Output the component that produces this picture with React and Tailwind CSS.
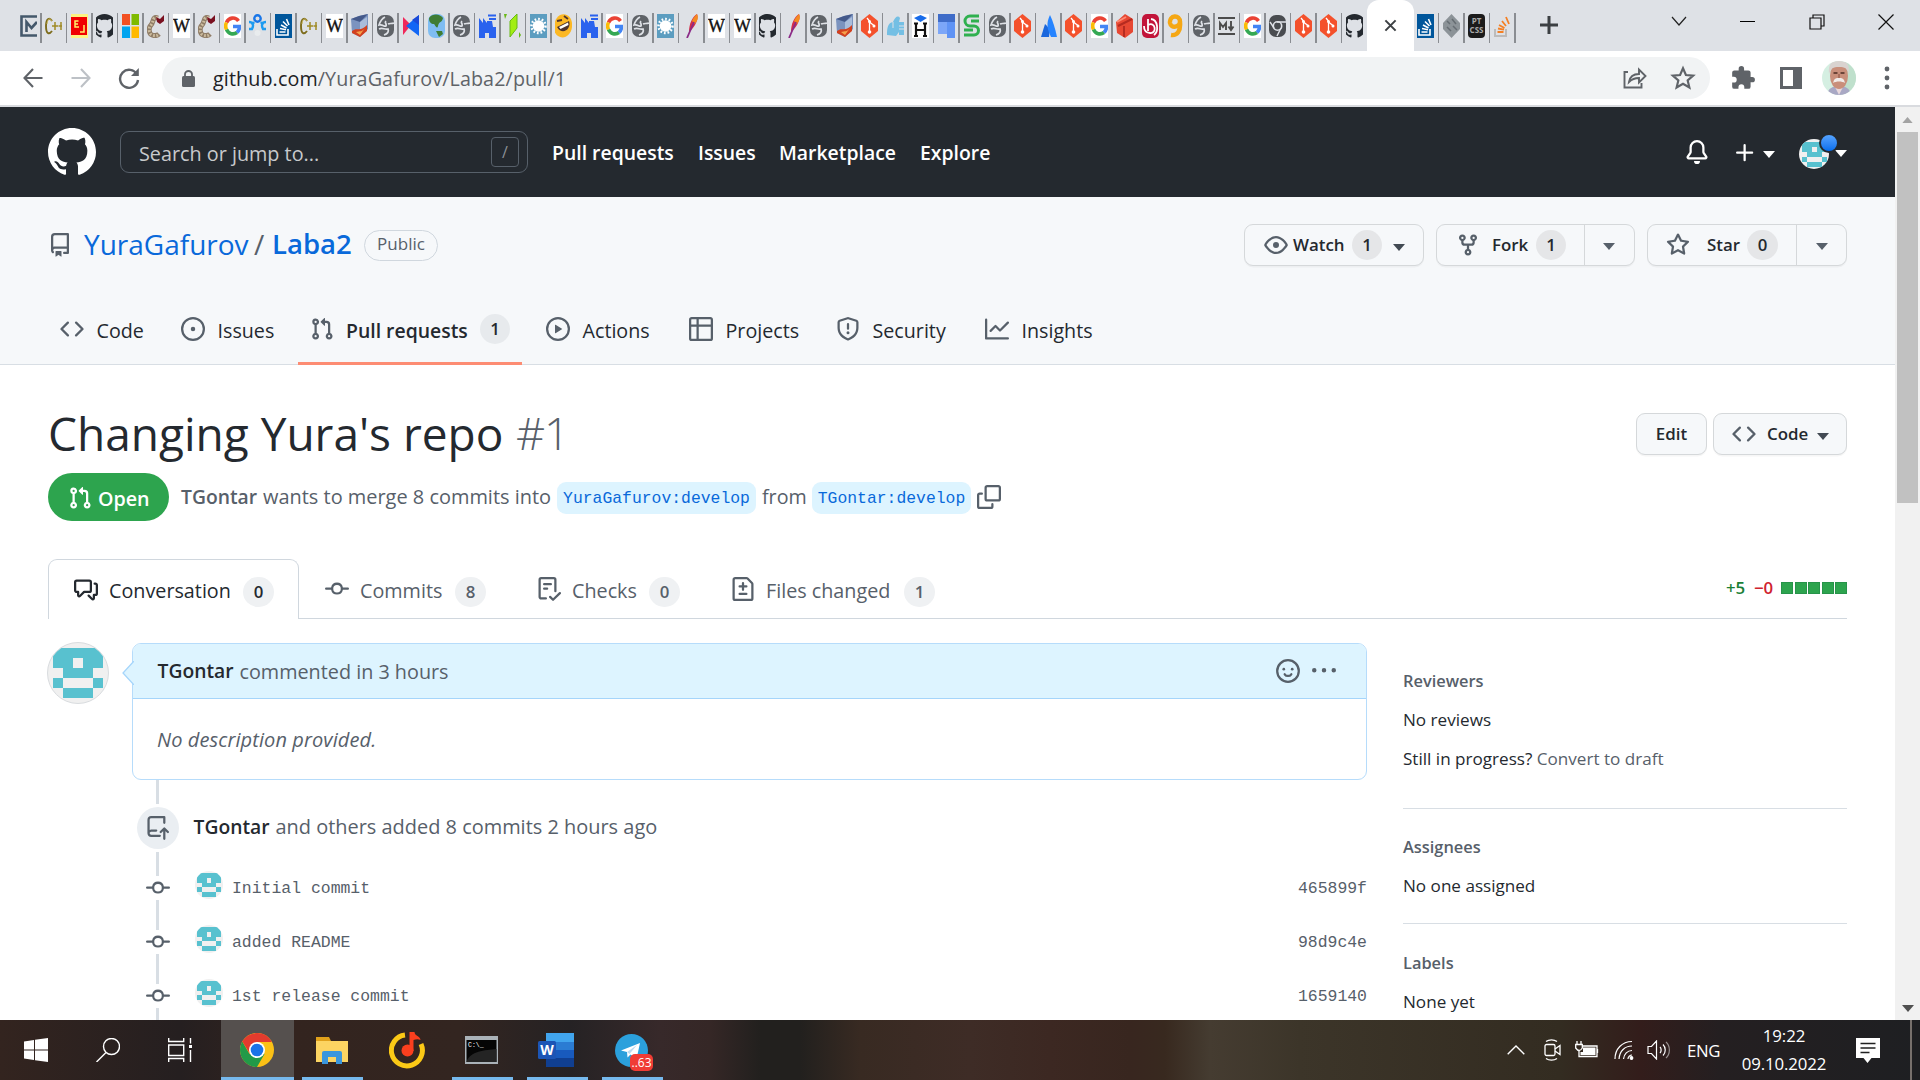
import React from "react";

const P = {
  mark: "M8 0C3.58 0 0 3.58 0 8c0 3.54 2.29 6.53 5.47 7.59.4.07.55-.17.55-.38 0-.19-.01-.82-.01-1.49-2.01.37-2.53-.49-2.69-.94-.09-.23-.48-.94-.82-1.13-.28-.15-.68-.52-.01-.53.63-.01 1.08.58 1.23.82.72 1.21 1.87.87 2.33.66.07-.52.28-.87.51-1.07-1.78-.2-3.64-.89-3.64-3.95 0-.87.31-1.59.82-2.15-.08-.2-.36-1.02.08-2.12 0 0 .67-.21 2.2.82.64-.18 1.32-.27 2-.27.68 0 1.36.09 2 .27 1.53-1.04 2.2-.82 2.2-.82.44 1.1.16 1.92.08 2.12.51.56.82 1.27.82 2.15 0 3.07-1.87 3.75-3.65 3.95.29.25.54.73.54 1.48 0 1.07-.01 1.93-.01 2.2 0 .21.15.46.55.38A8.013 8.013 0 0016 8c0-4.42-3.58-8-8-8z",
  repo: "M2 2.5A2.5 2.5 0 014.5 0h8.75a.75.75 0 01.75.75v12.5a.75.75 0 01-.75.75h-2.5a.75.75 0 110-1.5h1.75v-2h-8a1 1 0 00-.714 1.7.75.75 0 01-1.072 1.05A2.495 2.495 0 012 11.5v-9zm10.5-1V9h-8c-.356 0-.694.074-1 .208V2.5a1 1 0 011-1h8zM5 12.25v3.25a.25.25 0 00.4.2l1.45-1.087a.25.25 0 01.3 0L8.6 15.7a.25.25 0 00.4-.2v-3.25a.25.25 0 00-.25-.25h-3.5a.25.25 0 00-.25.25z",
  code: "M4.72 3.22a.75.75 0 011.06 1.06L2.06 8l3.72 3.72a.75.75 0 11-1.06 1.06L.47 8.53a.75.75 0 010-1.06l4.25-4.25zm6.56 0a.75.75 0 10-1.06 1.06L13.94 8l-3.72 3.72a.75.75 0 101.06 1.06l4.25-4.25a.75.75 0 000-1.06l-4.25-4.25z",
  issue: "M8 9.5a1.5 1.5 0 100-3 1.5 1.5 0 000 3zM8 0a8 8 0 100 16A8 8 0 008 0zM1.5 8a6.5 6.5 0 1113 0 6.5 6.5 0 01-13 0z",
  pr: "M7.177 3.073L9.573.677A.25.25 0 0110 .854v4.792a.25.25 0 01-.427.177L7.177 3.427a.25.25 0 010-.354zM3.75 2.5a.75.75 0 100 1.5.75.75 0 000-1.5zm-2.25.75a2.25 2.25 0 113 2.122v5.256a2.251 2.251 0 11-1.5 0V5.372A2.25 2.25 0 011.5 3.25zM11 2.5h-1V4h1a1 1 0 011 1v5.628a2.251 2.251 0 101.5 0V5A2.5 2.5 0 0011 2.5zm1 10.25a.75.75 0 111.5 0 .75.75 0 01-1.5 0zM3.75 12a.75.75 0 100 1.5.75.75 0 000-1.5z",
  play: "M1.5 8a6.5 6.5 0 1113 0 6.5 6.5 0 01-13 0zM8 0a8 8 0 100 16A8 8 0 008 0zM6.379 5.227A.25.25 0 006 5.442v5.117a.25.25 0 00.379.214l4.264-2.559a.25.25 0 000-.428L6.379 5.227z",
  table: "M0 1.75C0 .784.784 0 1.75 0h12.5C15.216 0 16 .784 16 1.75v12.5A1.75 1.75 0 0114.25 16H1.75A1.75 1.75 0 010 14.25V1.75zM1.5 6.5v7.75c0 .138.112.25.25.25H5v-8H1.5zM5 5V1.5H1.75a.25.25 0 00-.25.25V5H5zm1.5 1.5v8h7.75a.25.25 0 00.25-.25V6.5h-8zm8-1.5V1.75a.25.25 0 00-.25-.25H6.5V5h8z",
  shield: "M7.467.133a1.75 1.75 0 011.066 0l5.25 1.68A1.75 1.75 0 0115 3.48V7c0 1.566-.32 3.182-1.303 4.682-.983 1.498-2.585 2.813-5.032 3.855a1.7 1.7 0 01-1.33 0c-2.447-1.042-4.049-2.357-5.032-3.855C1.32 10.182 1 8.566 1 7V3.48a1.75 1.75 0 011.217-1.667l5.25-1.68zm.61 1.429a.25.25 0 00-.153 0l-5.25 1.68a.25.25 0 00-.174.238V7c0 1.358.275 2.666 1.057 3.86.784 1.194 2.121 2.34 4.366 3.297a.2.2 0 00.154 0c2.245-.956 3.582-2.104 4.366-3.298C13.225 9.666 13.5 8.36 13.5 7V3.48a.25.25 0 00-.174-.237l-5.25-1.68zM9 10.5a1 1 0 11-2 0 1 1 0 012 0zm-.25-5.75a.75.75 0 10-1.5 0v3a.75.75 0 001.5 0v-3z",
  graph: "M1.5 1.75a.75.75 0 00-1.5 0v12.5c0 .414.336.75.75.75h14.5a.75.75 0 000-1.5H1.5V1.75zm14.28 2.53a.75.75 0 00-1.06-1.06L10 7.94 7.53 5.47a.75.75 0 00-1.06 0L3.22 8.72a.75.75 0 001.06 1.06L7 7.06l2.47 2.47a.75.75 0 001.06 0l5.25-5.25z",
  eye: "M1.679 7.932c.412-.621 1.242-1.75 2.366-2.717C5.175 4.242 6.527 3.5 8 3.5c1.473 0 2.824.742 3.955 1.715 1.124.967 1.954 2.096 2.366 2.717a.119.119 0 010 .136c-.412.621-1.242 1.75-2.366 2.717C10.825 11.758 9.473 12.5 8 12.5c-1.473 0-2.824-.742-3.955-1.715C2.92 9.818 2.09 8.69 1.679 8.068a.119.119 0 010-.136zM8 2c-1.981 0-3.67.992-4.933 2.078C1.797 5.169.88 6.423.43 7.1a1.619 1.619 0 000 1.798c.45.678 1.367 1.932 2.637 3.024C4.329 13.008 6.019 14 8 14c1.981 0 3.67-.992 4.933-2.078 1.27-1.091 2.187-2.345 2.637-3.023a1.619 1.619 0 000-1.798c-.45-.678-1.367-1.932-2.637-3.023C11.671 2.992 9.981 2 8 2zm0 8a2 2 0 100-4 2 2 0 000 4z",
  fork: "M5 3.25a.75.75 0 11-1.5 0 .75.75 0 011.5 0zm0 2.122a2.25 2.25 0 10-1.5 0v.878A2.25 2.25 0 005.75 8.5h1.5v2.128a2.251 2.251 0 101.5 0V8.5h1.5a2.25 2.25 0 002.25-2.25v-.878a2.25 2.25 0 10-1.5 0v.878a.75.75 0 01-.75.75h-4.5A.75.75 0 015 6.25v-.878zm3.75 7.378a.75.75 0 11-1.5 0 .75.75 0 011.5 0zm3-8.75a.75.75 0 100-1.5.75.75 0 000 1.5z",
  star: "M8 .25a.75.75 0 01.673.418l1.882 3.815 4.21.612a.75.75 0 01.416 1.279l-3.046 2.97.719 4.192a.75.75 0 01-1.088.791L8 12.347l-3.766 1.98a.75.75 0 01-1.088-.79l.72-4.194L.818 6.374a.75.75 0 01.416-1.28l4.21-.611L7.327.668A.75.75 0 018 .25zm0 2.445L6.615 5.5a.75.75 0 01-.564.41l-3.097.45 2.24 2.184a.75.75 0 01.216.664l-.528 3.084 2.769-1.456a.75.75 0 01.698 0l2.77 1.456-.53-3.084a.75.75 0 01.216-.664l2.24-2.183-3.096-.45a.75.75 0 01-.564-.41L8 2.694v.001z",
  bell: "M8 16a2 2 0 001.985-1.75c.017-.137-.097-.25-.235-.25h-3.5c-.138 0-.252.113-.235.25A2 2 0 008 16zM3 5a5 5 0 0110 0v2.947c0 .05.015.098.042.139l1.703 2.555A1.518 1.518 0 0113.482 13H2.518a1.518 1.518 0 01-1.263-2.36l1.703-2.554A.25.25 0 003 7.947V5zm5-3.5A3.5 3.5 0 004.5 5v2.947c0 .346-.102.683-.294.97l-1.703 2.556a.018.018 0 00-.003.01c0 .01.008.017.018.017h10.964c.01 0 .018-.008.018-.017a.017.017 0 00-.003-.01l-1.703-2.554a1.75 1.75 0 01-.294-.97V5A3.5 3.5 0 008 1.5z",
  plus: "M7.75 2a.75.75 0 01.75.75V7h4.25a.75.75 0 110 1.5H8.5v4.25a.75.75 0 11-1.5 0V8.5H2.75a.75.75 0 010-1.5H7V2.75A.75.75 0 017.75 2z",
  talk: "M1.5 2.75a.25.25 0 01.25-.25h8.5a.25.25 0 01.25.25v5.5a.25.25 0 01-.25.25h-3.5a.75.75 0 00-.53.22L3.5 11.44V9.25a.75.75 0 00-.75-.75h-1a.25.25 0 01-.25-.25v-5.5zM1.75 1A1.75 1.75 0 000 2.75v5.5C0 9.216.784 10 1.75 10H2v1.543a1.457 1.457 0 002.487 1.03L7.061 10h3.189A1.75 1.75 0 0012 8.25v-5.5A1.75 1.75 0 0010.25 1h-8.5zM14.5 4.75a.25.25 0 00-.25-.25h-.5a.75.75 0 110-1.5h.5c.966 0 1.75.784 1.75 1.75v5.5A1.75 1.75 0 0114.25 12H14v1.543a1.457 1.457 0 01-2.487 1.03L9.22 12.28a.75.75 0 111.06-1.06l2.22 2.22v-2.19a.75.75 0 01.75-.75h1a.25.25 0 00.25-.25v-5.5z",
  commit: "M10.5 7.75a2.5 2.5 0 11-5 0 2.5 2.5 0 015 0zm1.43.75a4.002 4.002 0 01-7.86 0H.75a.75.75 0 110-1.5h3.32a4.001 4.001 0 017.86 0h3.32a.75.75 0 110 1.5h-3.32z",
  check: "M2.5 1.75a.25.25 0 01.25-.25h8.5a.25.25 0 01.25.25v7.736a.75.75 0 101.5 0V1.75A1.75 1.75 0 0011.25 0h-8.5A1.75 1.75 0 001 1.75v11.5c0 .966.784 1.75 1.75 1.75h3.17a.75.75 0 000-1.5H2.75a.25.25 0 01-.25-.25V1.75zM4.75 4a.75.75 0 000 1.5h4.5a.75.75 0 000-1.5h-4.5zM4 7.75A.75.75 0 014.75 7h2a.75.75 0 010 1.5h-2A.75.75 0 014 7.75zm11.774 3.537a.75.75 0 00-1.048-1.074L10.7 14.145 9.281 12.72a.75.75 0 00-1.062 1.058l1.943 1.95a.75.75 0 001.055.008l4.557-4.45z",
  diff: "M2.75 1.5a.25.25 0 00-.25.25v12.5c0 .138.112.25.25.25h10.5a.25.25 0 00.25-.25V4.664a.25.25 0 00-.073-.177l-2.914-2.914a.25.25 0 00-.177-.073H2.75zM1 1.75C1 .784 1.784 0 2.75 0h7.586c.464 0 .909.184 1.237.513l2.914 2.914c.329.328.513.773.513 1.237v9.586A1.75 1.75 0 0113.25 16H2.75A1.75 1.75 0 011 14.25V1.75zm7 1.5a.75.75 0 01.75.75v1.5h1.5a.75.75 0 010 1.5h-1.5v1.5a.75.75 0 01-1.5 0V7h-1.5a.75.75 0 010-1.5h1.5V4A.75.75 0 018 3.25zm-3 8a.75.75 0 01.75-.75h4.5a.75.75 0 010 1.5h-4.5a.75.75 0 01-.75-.75z",
  copy: "M0 6.75C0 5.784.784 5 1.75 5h1.5a.75.75 0 010 1.5h-1.5a.25.25 0 00-.25.25v7.5c0 .138.112.25.25.25h7.5a.25.25 0 00.25-.25v-1.5a.75.75 0 011.5 0v1.5A1.75 1.75 0 019.25 16h-7.5A1.75 1.75 0 010 14.25v-7.5zM5 1.75C5 .784 5.784 0 6.75 0h7.5C15.216 0 16 .784 16 1.75v7.5A1.75 1.75 0 0114.25 11h-7.5A1.75 1.75 0 015 9.25v-7.5zm1.75-.25a.25.25 0 00-.25.25v7.5c0 .138.112.25.25.25h7.5a.25.25 0 00.25-.25v-7.5a.25.25 0 00-.25-.25h-7.5z",
  kebab: "M8 9a1.5 1.5 0 100-3 1.5 1.5 0 000 3zM1.5 9a1.5 1.5 0 100-3 1.5 1.5 0 000 3zm13 0a1.5 1.5 0 100-3 1.5 1.5 0 000 3z",
};

function Oct({ d, className = "" }) {
  return (
    <svg viewBox="0 0 16 16" fill="currentColor" className={"shrink-0 " + (className.includes("size-") ? "" : "size-6 ") + className}>
      <path fillRule="evenodd" clipRule="evenodd" d={d} />
    </svg>
  );
}

const Caret = ({ className = "" }) => (
  <svg viewBox="0 0 12 7" fill="currentColor" className={"h-[7px] w-3 shrink-0 " + className}>
    <path d="M0 0h12L6 7z" />
  </svg>
);

/* Pixel identicon of the pull request author */
const Identicon = ({ className = "" }) => (
  <svg viewBox="0 0 60 60" className={"shrink-0 rounded-full bg-[#f0f0f0] " + className}>
    <path fill="#58c1cf" fillRule="evenodd" shapeRendering="crispEdges" d="M5 5h50v20H45v10H15V25H5zM25 15v10h10V15zM5 35h10v10H5zM45 35h10v10H45zM15 45h30v10H15z" />
  </svg>
);

/* ---------- favicons, each drawn in a 17 x 24 cell ---------- */
const Fav = ({ children, bg = "none" }) => (
  <svg viewBox="0 0 17 24" className="h-6 w-[17px]">
    <rect width="17" height="24" fill={bg} />
    {children}
  </svg>
);
const serif = '"Liberation Serif", serif';
const sans = '"Open Sans", sans-serif';

const favs = {
  m: (
    <Fav>
      <path d="M17 2.500H1.500v19H17M6.500 18V8l5 6 5.500-6" fill="none" stroke="#44586b" strokeWidth="2.600" />
    </Fav>
  ),
  cpp: (
    <Fav>
      <path d="M7 7C5 3 1 4 1 12s3 9 6 5" fill="none" stroke="#7d6c1c" strokeWidth="1.900" />
      <path d="M7 7C5 3 2.500 5 2 10" fill="none" stroke="#c9b45a" strokeWidth="0.900" />
      <path d="M7 12h6M10 8v8M13.500 12H17M16 8v8" stroke="#a08a26" strokeWidth="1.500" />
    </Fav>
  ),
  red: (
    <Fav bg="#fdf383">
      <rect y="3" width="16" height="18" fill="#f00000" />
      <path d="M7.500 7H4v6h4M4 10h3M13 11v7H9" fill="none" stroke="#fff06a" strokeWidth="1.500" />
    </Fav>
  ),
  gh: (
    <Fav>
      <g transform="translate(-3.5 0) scale(1.5)">
        <path d={P.mark} fill="#24292f" />
      </g>
    </Fav>
  ),
  ms: (
    <Fav>
      <path fill="#f25022" d="M0 0h8v11H0z" />
      <path fill="#7fba00" d="M9.500 0H17v11H9.500z" />
      <path fill="#00a4ef" d="M0 12.500h8V24H0z" />
      <path fill="#ffb900" d="M9.500 12.500H17V24H9.500z" />
    </Fav>
  ),
  gcc: (
    <Fav>
      <path d="M11 4C5 2 7 8 4 11s-2 9 1 10 5 1 7-1" fill="none" stroke="#8f7c66" strokeWidth="5" />
      <path d="M11 4C5 2 7 8 4 11s-2 9 1 10 5 1 7-1" fill="none" stroke="#cdbd9f" strokeWidth="3" strokeDasharray="1.800 1.600" />
      <path d="M9 3l4 2 4-4v6l-4 3-3-2z" fill="#7a1020" />
    </Fav>
  ),
  w: (
    <Fav bg="#fff">
      <text x="8.500" y="18" fontSize="18" textAnchor="middle" fontFamily={serif} fill="#111" stroke="#111" strokeWidth="0.400">W</text>
    </Fav>
  ),
  g: (
    <Fav bg="#fff">
      <g fill="none" strokeWidth="3.600">
        <path d="M14.500 7A7.200 8 0 002.500 8.500" stroke="#ea4335" />
        <path d="M2.500 8.500a8 8 0 000 7" stroke="#fbbc05" />
        <path d="M2.500 15.500A7.200 8 0 0013 18.500" stroke="#34a853" />
        <path d="M13 18.500a8 8 0 002.500-6H9" stroke="#4285f4" />
      </g>
    </Fav>
  ),
  nodes: (
    <Fav>
      <circle cx="8.500" cy="4.500" r="3.200" fill="none" stroke="#1976e8" strokeWidth="2.400" />
      <path d="M0 8c4 0 5 3 3 7H0M17 8c-4 0-5 3-3 7h3M5 8l-2 3M12 8l2 3" fill="none" stroke="#1e9bf0" strokeWidth="2.400" />
      <circle cx="8.500" cy="19" r="3" fill="#e9ecee" />
    </Fav>
  ),
  se: (
    <Fav bg="#00569b">
      <path d="M2 15v6h11v-6M4.500 18h6M5 14.500l6 1.200M6 11l5.500 3M8 7.500l4.500 4.500M11.500 5l2.500 6" fill="none" stroke="#fff" strokeWidth="1.600" />
    </Fav>
  ),
  so: (
    <Fav>
      <path d="M1 15v7h11v-7" fill="none" stroke="#bcbbbb" strokeWidth="2" />
      <path d="M3.500 18h6M4 14.500l6 1.200M5 11l5.500 3M8 7l4 5M12 3l3 7" fill="none" stroke="#f48024" strokeWidth="1.800" />
    </Fav>
  ),
  cube: (
    <Fav>
      <path d="M0 5l8-3 9-2v15l-8 8-8-4z" fill="#7b93bf" />
      <path d="M0 5l9 3 8-8-9 2z" fill="#44598a" />
      <path d="M9 8l7-5v10l-7 5z" fill="#a9bddb" />
      <path d="M1 17c5-4 9 1 15-6v6l-7 6-8-4z" fill="#d2401f" />
      <path d="M5 18c4-1 6 0 9-4l-5 7z" fill="#f6a04a" />
    </Fav>
  ),
  globe: (
    <Fav>
      <rect y="1" width="17" height="22" rx="7" fill="#5f6368" />
      <path d="M8 3c-4 2-5 5-6 8 4-1 5 2 7 1 1-3-2-3 0-5M17 9c-3 1-4 0-6 1M2 15c4-2 5 1 9 0 1 3-1 5-4 6" fill="none" stroke="#dee1e6" strokeWidth="1.700" />
    </Fav>
  ),
  vs: (
    <Fav>
      <path d="M1 3l8 8-8 10z" fill="#f0285a" />
      <path d="M17 1v21L4 12z" fill="#1166f5" />
      <path d="M10 6l7-5v10z" fill="#1a4ad8" />
    </Fav>
  ),
  earth: (
    <Fav>
      <rect width="17" height="24" rx="7" fill="#7fbdf2" />
      <path d="M1 4c4-5 11-4 14 0-1 5-4 3-5 8-1 4-3-1-4-2-3 0-5-2-5-6zM8 17h6l1 3-4 3z" fill="#3f7d34" />
    </Fav>
  ),
  fact: (
    <Fav>
      <path d="M0 24V4l4 5V4l4 5V7h5l1 6h1v11h-5v-6H6v6z" fill="#2a62ee" />
      <path d="M0 13h17v11h-5v-5H5v5H0z" fill="#2a62ee" />
      <path d="M9 1.500h8M10 5h7" stroke="#2a62ee" strokeWidth="2.200" />
    </Fav>
  ),
  green: (
    <Fav>
      <path d="M6 7l7-7v14l-7 9z" fill="#a2ee12" stroke="#68b815" strokeWidth="1" />
      <path d="M0 0h3L1 5zM15 18l2 3-2 3z" fill="#68b815" />
    </Fav>
  ),
  splat: (
    <Fav bg="#5c9dc0">
      <circle cx="8.500" cy="12" r="5.800" fill="#fff" />
      <circle cx="8.500" cy="12" r="7" fill="none" stroke="#fff" strokeWidth="2.500" strokeDasharray="1.700 1.900" />
    </Fav>
  ),
  emoji: (
    <Fav>
      <path d="M5 1c8-3 13 4 12 12s-8 13-14 9S-2 5 5 1z" fill="#fcb824" />
      <path d="M2 13L14 7c3 8-7 15-12 6z" fill="#4e342e" />
      <path d="M4 13l9-4.500.5 2.500-8 4z" fill="#fff" />
      <path d="M2 7l5-1M9 2l4 3" stroke="#4e342e" strokeWidth="1.800" />
    </Fav>
  ),
  feather: (
    <Fav>
      <path d="M14 0c2 5-2 13-8 18C6 10 9 3 14 0z" fill="#d4304a" />
      <path d="M14 0c2 4 0 7-2 10L9 7c1-3 3-5 5-7z" fill="#f48a20" />
      <path d="M11 8L4 24" stroke="#8b2b88" strokeWidth="1.800" />
    </Fav>
  ),
  git: (
    <Fav>
      <path d="M8.500 0L17 7v10l-8.500 7L0 17V7z" fill="#f4512c" />
      <path d="M6 4l2.500 3v11M8.500 8l5 4" stroke="#fff" strokeWidth="1.300" fill="none" />
      <circle cx="8.500" cy="18" r="1.800" fill="#fff" />
      <circle cx="13" cy="12" r="1.500" fill="#fff" />
      <circle cx="8.500" cy="7.500" r="1.500" fill="#fff" />
    </Fav>
  ),
  docs: (
    <Fav>
      <path d="M0 21c0-8 1-12 6-13C8 3 11 1 13 4l-1 4h5v13h-5v-3l-3 4z" fill="#74bfe4" />
      <path d="M6 8v6M12 12h5M12 15h5" stroke="#dee1e6" fill="none" />
    </Fav>
  ),
  h: (
    <Fav bg="#fff">
      <path d="M2 4l6.500-3L15 4l-6.500 4z" fill="#176bea" />
      <path d="M4 9v13M13 9v13M4 16h9M2 9.500h4M11 9.500h4M2 22h4M11 22h4" stroke="#111" strokeWidth="2.200" />
    </Fav>
  ),
  blue: (
    <Fav>
      <path d="M0 0h17v24h-8V8H0z" fill="#4d7fe8" />
      <path d="M0 0h17v8H0z" fill="#3f6cc8" />
      <path d="M9 8h8v16H9z" fill="#5f93f5" />
      <path d="M0 8h9v12H0z" fill="#7ca6f8" />
    </Fav>
  ),
  s: (
    <Fav>
      <path d="M16 2H7a5 5 0 000 10h4a4 4 0 010 9H1M16 7H8M1 16h9" fill="none" stroke="#2fb04f" strokeWidth="3" />
    </Fav>
  ),
  atl: (
    <Fav>
      <path d="M5 10c4 3 5 7 4 13H1z" fill="#1a67dd" />
      <path d="M10 1c3 6 5 13 7 22h-6c-4-8-5-14-1-22z" fill="#2684ff" />
    </Fav>
  ),
  box: (
    <Fav>
      <path d="M0 8l9-8 8 5v13l-8 6-8-5z" fill="#e74833" />
      <path d="M2 12l14-7M8 12v11" stroke="#b52b20" strokeWidth="2" />
      <path d="M1 8l9-5" stroke="#ff8a74" strokeWidth="2" />
    </Fav>
  ),
  b: (
    <Fav>
      <rect width="17" height="24" rx="5" fill="#c2143a" />
      <path d="M6 5v12M6 11c8-4 9 9 2 8-5 0-6-4-6-7M9 5c7 1 8 12 3 16" fill="none" stroke="#fff" strokeWidth="1.800" />
    </Fav>
  ),
  nine: (
    <Fav>
      <path d="M13 8c0-8-11-7-10 1 1 6 10 4 10-1 1 9-3 14-9 13" fill="none" stroke="#f5a714" strokeWidth="4.400" />
    </Fav>
  ),
  md: (
    <Fav>
      <path d="M0 4h17M0 20h17M2 16V9l3 4 3-4v7M13 7v8M10.500 12.500L13 16l2.500-3.500" fill="none" stroke="#4c4c4c" strokeWidth="1.900" />
    </Fav>
  ),
  chrome: (
    <Fav>
      <rect y="1" width="17" height="22" rx="7" fill="#494c50" />
      <circle cx="8.500" cy="12" r="4.200" fill="none" stroke="#dee1e6" strokeWidth="1.600" />
      <path d="M8 8h9M5 14L1 8M12 14l-4 8" stroke="#dee1e6" strokeWidth="1.400" />
    </Fav>
  ),
  gray: (
    <Fav>
      <path d="M8.500 0L17 9v6l-8.500 9L0 15V9z" fill="#8c9398" />
      <path d="M4 7l3 3M9 5l4 5M4 13l4 4M10 12l4 4" stroke="#666d73" strokeWidth="1.500" />
    </Fav>
  ),
  css: (
    <Fav>
      <rect width="17" height="24" rx="4" fill="#1b1b1b" />
      <text x="8.500" y="10" fontSize="8" textAnchor="middle" fontFamily={sans} fontWeight="700" fill="#aaa">PT</text>
      <text x="8.500" y="19" fontSize="8" textAnchor="middle" fontFamily={sans} fontWeight="700" fill="#aaa">CSS</text>
    </Fav>
  ),
};

const tabList =
  "m cpp red gh ms gcc w gcc g nodes se cpp w cube globe vs earth globe fact green splat emoji fact g globe splat feather w w gh feather globe cube git docs h blue s globe git atl git g box b nine globe md g chrome git git gh".split(" ");

const TabCell = ({ id, last }) => (
  <div className="flex h-[51px] w-[25.5px] shrink-0 items-center">
    <div className="flex h-6 w-[24px] items-center justify-center">{favs[id]}</div>
    <div className={last ? "w-0" : "mt-1 h-[30px] w-[1.5px] bg-[#8a8d92]"} />
  </div>
);

function TabStrip() {
  return (
    <div className="flex h-[51px] bg-[#dee1e6] pl-[16px]">
      {tabList.map((id, i) => (
        <TabCell key={i} id={id} last={i === tabList.length - 1} />
      ))}
      <div className="-ml-px flex h-[51px] w-[47px] shrink-0 items-center justify-center rounded-t-[12px] bg-white">
        <svg viewBox="0 0 14 14" className="size-[13px]">
          <path d="M1.500 1.500l11 11M12.500 1.500l-11 11" stroke="#3c4043" strokeWidth="2.200" />
        </svg>
      </div>
      {["se", "gray", "css", "so"].map((id) => (
        <TabCell key={id} id={id} />
      ))}
      <svg viewBox="0 0 18 18" className="mt-4 ml-[24px] size-[18px] shrink-0">
        <path d="M9 0v18M0 9h18" stroke="#3c4043" strokeWidth="3" />
      </svg>
      <svg viewBox="0 0 16 10" className="mt-4 ml-[113px] h-[10px] w-4 shrink-0">
        <path d="M1 1l7 8 7-8" fill="none" stroke="#222" strokeWidth="1.200" />
      </svg>
      <div className="mt-[21px] ml-[53px] h-px w-[15px] bg-black" />
      <svg viewBox="0 0 16 16" className="mt-[14px] ml-[54px] size-4 shrink-0" fill="none" stroke="#111" strokeWidth="1.200">
        <path d="M1 4h11v11H1zM4 4V1h11v11h-3" />
      </svg>
      <svg viewBox="0 0 16 16" className="mt-[14px] ml-[53px] size-4 shrink-0">
        <path d="M.5.5l15 15M15.500.5l-15 15" stroke="#111" strokeWidth="1.200" />
      </svg>
    </div>
  );
}

function Toolbar() {
  return (
    <div className="flex h-[54px] items-center bg-white pl-[23px] text-[#5f6368]">
      <svg viewBox="0 0 20 20" className="size-5" fill="none" stroke="currentColor" strokeWidth="2.100">
        <path d="M19.500 10H1.500M10 1L1.500 10l8.500 9" />
      </svg>
      <svg viewBox="0 0 20 20" className="ml-[28px] size-5 text-[#bdc1c6]" fill="none" stroke="currentColor" strokeWidth="2.100">
        <path d="M.5 10h18M10 1l8.500 9-8.500 9" />
      </svg>
      <svg viewBox="0 0 22 22" className="ml-[27px] size-[22px]" fill="none" stroke="currentColor" strokeWidth="2.400">
        <path d="M19 7.500A9 9 0 1020 13" />
        <path d="M20.800 1v8H13z" fill="currentColor" stroke="none" />
      </svg>
      <div className="ml-[22px] flex h-[42px] w-[1548px] items-center rounded-full bg-[#f1f3f4] pl-[20px]">
        <svg viewBox="0 0 13 17" className="h-[17px] w-[13px] shrink-0">
          <rect y="6" width="13" height="11" rx="1.500" fill="#5f6368" />
          <path d="M3 7V4a3.500 3 0 017 0v3" fill="none" stroke="#5f6368" strokeWidth="1.800" />
        </svg>
        <span className="ml-[18px] w-[1410px] shrink-0 pt-[2px] text-[19.700px] tracking-[0.120px] whitespace-nowrap">
          <span className="text-[#202124]">github.com</span>/YuraGafurov/Laba2/pull/1
        </span>
        <svg viewBox="0 0 24 22" className="h-[22px] w-6 shrink-0" fill="none" stroke="currentColor" strokeWidth="1.900">
          <path d="M5 5H1.500v15.500h17V16M6 15c1-6 5-8 10-8V2.500L22.500 9 16 15.500V11c-4 0-7 1-10 4z" />
        </svg>
        <svg viewBox="0 0 24 24" className="ml-[23px] size-[26px] shrink-0" fill="none" stroke="currentColor" strokeWidth="2">
          <path d="M12 3l2.700 6.200 6.700.6-5.100 4.400 1.600 6.600L12 17.300l-5.900 3.500 1.600-6.600-5.100-4.400 6.700-.6z" />
        </svg>
      </div>
      <svg viewBox="0 0 24 24" className="ml-[20px] size-[26px]" fill="currentColor">
        <path d="M20.500 11H19V7a2 2 0 00-2-2h-4V3.500a2.500 2.500 0 00-5 0V5H4a2 2 0 00-2 2v3.800h1.500a2.700 2.700 0 010 5.400H2V20a2 2 0 002 2h3.800v-1.500a2.700 2.700 0 015.400 0V22H17a2 2 0 002-2v-4h1.500a2.500 2.500 0 000-5z" />
      </svg>
      <div className="ml-[24px] h-[22px] w-[22px] border-[3px] border-r-[9px] border-[#5f6368]" />
      <svg viewBox="0 0 34 34" className="ml-[20px] size-[34px] rounded-full bg-[#d5efe2]">
        <path d="M22 0h12v34H22z" fill="#bfe0cc" />
        <path d="M5 34c1-7 6-9 12-9s11 2 12 9z" fill="#a9a8c4" />
        <path d="M12 24h10l-5 10z" fill="#e8d8dc" />
        <ellipse cx="17" cy="15" rx="9" ry="13" fill="#c98f7b" />
        <path d="M7 13C6 0 12 0 17 0s11 0 10 13c-2-6-4-7-10-7s-8 1-10 7z" fill="#d9d3d0" />
        <path d="M12 19c2-3 8-3 10 0l1 3c-3-2-9-2-12 0z" fill="#f1ebe8" />
        <path d="M11.500 12h4M18.500 12h4" stroke="#6b4438" strokeWidth="1.800" />
        <path d="M17 13v4" stroke="#a96f5c" strokeWidth="2" />
      </svg>
      <svg viewBox="0 0 6 26" className="ml-[28px] h-[26px] w-[6px]" fill="currentColor">
        <circle cx="3" cy="4" r="2.400" />
        <circle cx="3" cy="13" r="2.400" />
        <circle cx="3" cy="22" r="2.400" />
      </svg>
    </div>
  );
}

function GitHubHeader() {
  return (
    <div className="flex h-[90px] items-center bg-[#24292f] pl-12 text-white">
      <Oct d={P.mark} className="size-12" />
      <div className="ml-6 flex h-[42px] w-[408px] shrink-0 items-center justify-between rounded-[9px] border border-[#57606a] pr-[8px] pl-[18px]">
        <span className="pt-[3px] text-[19.800px] text-[#c8cacc]">Search or jump to...</span>
        <div className="flex h-[30px] w-7 items-center justify-center rounded border border-[#57606a] text-[16px] text-[#8b9096]">/</div>
      </div>
      <div className="ml-6 flex pt-[2px] text-[19.400px] font-semibold whitespace-nowrap">
        <span className="w-[146px]">Pull requests</span>
        <span className="w-[81px]">Issues</span>
        <span className="w-[141px]">Marketplace</span>
        <span className="w-[761px]">Explore</span>
      </div>
      <Oct d={P.bell} className="ml-[4px]" />
      <Oct d={P.plus} className="mt-px ml-[24px]" />
      <Caret className="mt-1 ml-[6px]" />
      <div className="relative mt-[3px] ml-6 size-[30px]">
        <Identicon className="size-[30px]" />
        <div className="absolute -top-[6px] left-[20px] size-[20px] rounded-full border-[2.500px] border-[#24292f] bg-gradient-to-b from-[#54a3ff] to-[#006eed]" />
      </div>
      <Caret className="mt-[3px] ml-[6px]" />
    </div>
  );
}

const btn = "flex h-[42px] shrink-0 items-center rounded-[9px] border border-[#d5d8da] bg-[#f6f8fa] text-[16.900px] font-semibold text-[#24292f] shadow-[0_1.500px_0_rgba(27,31,36,0.04)]";
const pill = "flex h-[30px] shrink-0 items-center justify-center rounded-full text-[16.800px] font-semibold";

function RepoHeader() {
  const tabs = [
    ["Code", P.code, "ml-[60px] w-[121px]"],
    ["Issues", P.issue, "w-[128px]"],
    ["Actions", P.play, "w-[143px]"],
    ["Projects", P.table, "w-[147px]"],
    ["Security", P.shield, "w-[149px]"],
    ["Insights", P.graph, "w-[120px]"],
  ];
  const Tab = ([label, d, cls]) => (
    <div key={label} className={"flex shrink-0 items-center pt-[2px] " + cls}>
      <Oct d={d} className="text-[#57606a]" />
      <span className="ml-[12.5px] pt-[4px] whitespace-nowrap">{label}</span>
    </div>
  );
  return (
    <div className="flex h-[168px] flex-col border-b border-[#d8dee4] bg-[#f6f8fa]">
      <div className="mt-[27px] flex h-[42px] items-center pr-[48px] pl-[48px]">
        <Oct d={P.repo} className="text-[#57606a]" />
        <div className="-mt-[3px] ml-3 flex text-[28px] leading-none whitespace-nowrap text-[#0969da]">
          <span className="w-[170px]">YuraGafurov</span>
          <span className="w-[18px] text-[#57606a]">/</span>
          <span className="w-[92px] text-[27.500px] font-semibold">Laba2</span>
        </div>
        <div className="flex h-[31px] w-[74px] items-center justify-center rounded-full border border-[#d0d7de] pb-[2px] text-[17px] font-medium text-[#57606a]">Public</div>
        <div className={btn + " ml-auto w-[180px] pl-[19px]"}>
          <Oct d={P.eye} className="text-[#57606a]" />
          <span className="ml-[5px] w-[59px]">Watch</span>
          <span className={pill + " w-[30px] bg-[#e5e6e8]"}>1</span>
          <Caret className="mt-[5px] ml-[11px] text-[#424a53]" />
        </div>
        <div className={btn + " ml-3 w-[199px] pl-[19px]"}>
          <Oct d={P.fork} className="text-[#57606a]" />
          <span className="ml-[12px] w-[44px]">Fork</span>
          <span className={pill + " w-[30px] bg-[#e5e6e8]"}>1</span>
          <div className="ml-[18px] h-[40px] w-px bg-[#d5d8da]" />
          <Caret className="mt-[2px] ml-[18px] text-[#57606a]" />
        </div>
        <div className={btn + " ml-3 w-[200px] pl-[18px]"}>
          <Oct d={P.star} className="text-[#57606a]" />
          <span className="ml-[17px] w-[40px]">Star</span>
          <span className={pill + " w-[31px] bg-[#e5e6e8]"}>0</span>
          <div className="ml-[18px] h-[40px] w-px bg-[#d5d8da]" />
          <Caret className="mt-[2px] ml-[19px] text-[#57606a]" />
        </div>
      </div>
      <div className="-mb-px mt-[25px] flex h-[74px] shrink-0 text-[19.700px] text-[#24292f]">
        {tabs.slice(0, 2).map(Tab)}
        <div className="-ml-[11px] flex w-[248px] shrink-0 pb-0">
          <div className="flex w-[224px] items-center border-b-[3px] border-[#fd8c73] pt-[4px] pl-[12px]">
            <Oct d={P.pr} className="text-[#57606a]" />
            <span className="ml-3 w-[134px] pt-[4px] text-[19.400px] font-semibold whitespace-nowrap">Pull requests</span>
            <span className={pill + " w-[30px] bg-[#e7eaed] font-medium"}>1</span>
          </div>
        </div>
        {tabs.slice(2).map(Tab)}
      </div>
    </div>
  );
}

function PrHeader() {
  return (
    <div className="pr-[48px] pl-[48px]">
      <div className="mt-[38px] flex h-[64px] items-start text-[#24292f]">
        <h1 className="-mt-[2px] w-[468px] text-[46px] leading-[64px] whitespace-nowrap">Changing Yura's repo</h1>
        <span className="-mt-[2px] text-[45px] leading-[64px] font-light tracking-[-1px] text-[#57606a]">#1</span>
        <div className={btn + " mt-[10px] ml-auto w-[71px] justify-center"}>Edit</div>
        <div className={btn + " mt-[10px] ml-[6px] w-[134px] pl-[18px]"}>
          <Oct d={P.code} className="text-[#57606a]" />
          <span className="ml-[11px] w-[42px]">Code</span>
          <Caret className="mt-[5px] ml-[8px] text-[#424a53]" />
        </div>
      </div>
      <div className="mt-[6px] flex h-12 items-center text-[19.950px] whitespace-nowrap text-[#57606a]">
        <div className="flex h-12 w-[121px] items-center rounded-full bg-[#2da44e] pl-[20px] text-[19.700px] font-semibold text-white">
          <Oct d={P.pr} className="mt-[2px]" />
          <span className="ml-[6px] pt-[4px]">Open</span>
        </div>
        <span className="ml-3 w-[82px] text-[19.300px] font-semibold">TGontar</span>
        <span className="w-[294px]">wants to merge 8 commits into</span>
        <span className="mt-[2px] flex h-8 w-[199px] items-center justify-center rounded-[9px] bg-[#ddf4ff] pt-[3px] font-[Liberation_Mono,monospace] text-[16.400px] text-[#0969da]">YuraGafurov:develop</span>
        <span className="ml-[6px] w-[50px] text-[19.700px]">from</span>
        <span className="mt-[2px] flex h-8 w-[159px] items-center justify-center rounded-[9px] bg-[#ddf4ff] pt-[3px] font-[Liberation_Mono,monospace] text-[16.400px] text-[#0969da]">TGontar:develop</span>
        <Oct d={P.copy} className="ml-[6px]" />
      </div>
    </div>
  );
}

function PrTabs() {
  const rest = [
    ["Commits", 8, P.commit, "w-[95px]", "ml-[26px]"],
    ["Checks", 0, P.check, "w-[77px]", "ml-[51px]"],
    ["Files changed", 1, P.diff, "w-[138px]", "ml-[51px]"],
  ];
  return (
    <div className="mt-[38px] mr-[48px] ml-[48px] flex h-[60px] text-[19.750px] whitespace-nowrap text-[#57606a]">
      <div className="flex w-[251px] shrink-0 items-center rounded-t-[9px] border border-b-0 border-[#d0d7de] pt-[4px] pl-[25px] text-[#24292f]">
        <Oct d={P.talk} className="-mt-1" />
        <span className="ml-[11px] w-[134px] pb-[2px]">Conversation</span>
        <span className={pill + " w-[31px] bg-[#eff1f3]"}>0</span>
      </div>
      <div className="flex grow items-center border-b border-[#d0d7de] pt-[5px]">
        {rest.map(([label, n, d, w, m]) => (
          <div key={label} className={"flex items-center " + m}>
            <Oct d={d} className="-mt-1" />
            <span className={"ml-[11px] pb-px " + w}>{label}</span>
            <span className={pill + " mt-px w-[31px] bg-[#eff1f3]"}>{n}</span>
          </div>
        ))}
        <div className="mb-[7px] ml-auto flex items-center text-[16.800px] font-semibold">
          <span className="w-[28px] text-[#1a7f37]">+5</span>
          <span className="w-[27px] text-[#cf222e]">−0</span>
          <div className="flex gap-[1.500px]">
            {[0, 1, 2, 3, 4].map((i) => (
              <div key={i} className="size-[12px] border border-[#27934a] bg-[#2da44e]" />
            ))}
          </div>
        </div>
      </div>
    </div>
  );
}

const Line = ({ className }) => <div className={"w-[3px] shrink-0 bg-[#d8dee4] " + className} />;

function Timeline() {
  const commits = [
    ["Initial commit", "465899f"],
    ["added README", "98d9c4e"],
    ["1st release commit", "1659140"],
  ];
  return (
    <div className="flex w-[1367px] shrink-0 pl-[47px]">
      <Identicon className="-mt-px size-[62px] border border-[#d9dcdf]" />
      <div className="ml-[23px] w-[1235px]">
        <div className="relative h-[137px] rounded-[9px] border border-[#b6dcfb] text-[19.800px] text-[#57606a]">
          <svg viewBox="0 0 12 24" className="absolute top-[17px] -left-[11px] h-6 w-3">
            <path d="M12 0L1 12l11 12" fill="#ddf4ff" stroke="#a5d5fb" strokeWidth="1.300" />
          </svg>
          <div className="flex h-[55px] items-center rounded-t-[8px] border-b border-[#a5d5fb] bg-[#ddf4ff] pr-[30px] pl-[24.500px]">
            <span className="w-[82px] pt-px text-[19.300px] font-semibold text-[#24292f]">TGontar</span>
            <span className="pt-px">commented in 3 hours</span>
            <svg viewBox="0 0 16 16" className="ml-auto size-6" fill="none" stroke="currentColor" strokeWidth="1.500" strokeLinecap="round">
              <circle cx="8" cy="8" r="7.200" />
              <circle cx="5.200" cy="6.800" r=".9" fill="currentColor" stroke="none" />
              <circle cx="10.800" cy="6.800" r=".9" fill="currentColor" stroke="none" />
              <path d="M5.800 10.200c1 1.500 3.400 1.500 4.400 0" />
            </svg>
            <Oct d={P.kebab} className="ml-3" />
          </div>
          <p className="pt-[27px] pl-[24px] text-[20px] leading-[28px] tracking-[0.100px] italic">No description provided.</p>
        </div>
        <Line className="ml-[24px] h-6" />
        <div className="mt-[3px] flex h-[42px] items-center pl-[5px] text-[19.950px] whitespace-nowrap text-[#57606a]">
          <div className="flex size-[42px] items-center justify-center rounded-full bg-[#eaeef2]">
            <svg viewBox="0 0 16 16" className="size-6" fill="none" stroke="currentColor" strokeWidth="1.500" strokeLinecap="round" strokeLinejoin="round">
              <path d="M12.200 4.500V.8H3.500a1.800 1.800 0 00-1.800 1.700v9a1.800 1.800 0 001.800 1.700h5.700M2 10.500a1.800 1.800 0 011.500-.8h3.300M12.200 15.200V8.500M9.800 10.700l2.400-2.400 2.400 2.400" />
            </svg>
          </div>
          <span className="-mt-[2px] ml-[14.500px] w-[82px] text-[19.300px] font-semibold text-[#24292f]">TGontar</span>
          <span className="-mt-[2px]">and others added 8 commits 2 hours ago</span>
        </div>
        <Line className="mt-[3px] ml-[24px] h-6" />
        {commits.map(([msg, sha]) => (
          <div key={sha}>
            <div className="flex h-6 items-center pl-[14px] font-[Liberation_Mono,monospace] text-[16.450px] text-[#57606a]">
              <Oct d={P.commit} />
              <Identicon className="-mt-[6px] ml-[25px] size-7" />
              <span className="ml-[9px] pt-[3px]">{msg}</span>
              <span className="ml-auto pt-[3px]">{sha}</span>
            </div>
            <Line className="ml-[24px] h-[30px]" />
          </div>
        ))}
      </div>
    </div>
  );
}

function Sidebar() {
  const head = "font-semibold text-[#57606a] text-[16.400px]";
  return (
    <div className="ml-9 w-[444px] shrink-0 pt-[24px] text-[17.100px] leading-[27px] text-[#24292f]">
      <div className={head}>Reviewers</div>
      <div className="mt-3">No reviews</div>
      <div className="mt-3">
        Still in progress? <span className="text-[#57606a]">Convert to draft</span>
      </div>
      <div className="mt-[36px] h-px bg-[#d8dee4]" />
      <div className={head + " mt-[24px]"}>Assignees</div>
      <div className="mt-3">No one assigned</div>
      <div className="mt-[24px] h-px bg-[#d8dee4]" />
      <div className={head + " mt-[25px]"}>Labels</div>
      <div className="mt-3">None yet</div>
    </div>
  );
}

function Taskbar() {
  const slot = "flex h-[60px] shrink-0 items-center justify-center border-b-[3px] pt-[3px] ";
  return (
    <div className="flex h-[60px] bg-[linear-gradient(90deg,#33241f_0px,#251f20_180px,#33241f_290px,#332520_460px,#252224_570px,#37292a_660px,#352726_710px,#22201e_760px,#22201e_800px,#382a22_860px,#3e2c26_970px,#3c2822_1050px,#38261f_1130px,#38291f_1165px,#453c31_1210px,#3c3529_1300px,#332c21_1560px,#331d1b_1640px,#241f21_1720px,#1e1f22_1920px)] text-white">
      <div className="flex w-[221px] shrink-0 items-center pl-6">
        <svg viewBox="0 0 24 24" className="size-6" fill="#fff">
          <path d="M0 3.400l10-1.400v9.500H0zM11 1.800L24 0v11.500H11zM0 12.500h10V22L0 20.600zM11 12.500h13V24l-13-1.800z" />
        </svg>
        <svg viewBox="0 0 24 24" className="ml-12 size-6" fill="none" stroke="#fff" strokeWidth="1.400">
          <circle cx="15.500" cy="8.500" r="8" />
          <path d="M10 14.500L.5 24" />
        </svg>
        <svg viewBox="0 0 24 24" className="ml-12 size-6" fill="none" stroke="#fff" strokeWidth="1.400">
          <path d="M.7 0v3.500h15V0M.7 7h15v10.500h-15zM.7 24v-3.500h15V24M22.500 0v5.500M22.500 12v12" />
          <path d="M21 7h3.500v3H21z" fill="#fff" stroke="none" />
        </svg>
      </div>
      <div className={slot + "w-[73px] border-[#76b9ed] bg-[#55504e] pr-[2px]"}>
        <svg viewBox="0 0 34 34" className="size-[34px]">
          <circle cx="17" cy="17" r="17" fill="#fbc116" />
          <path d="M2.300 8.500A17 17 0 0017 34l7.500-13L17 17 9.500 21z" fill="#229a48" />
          <path d="M17 9h14.900A17 17 0 002.300 8.500L10 21z" fill="#e33b2e" />
          <circle cx="17" cy="17" r="8" fill="#fff" />
          <circle cx="17" cy="17" r="6.300" fill="#1a73e8" />
        </svg>
      </div>
      <div className={slot + "ml-2 w-[61px] border-[#76b9ed] pr-[2px]"}>
        <svg viewBox="0 0 32 28" className="h-7 w-8">
          <path d="M0 1h13l2 4h17v21H0z" fill="#e0a11b" />
          <path d="M0 5h32v21H0z" fill="#fcd462" />
          <path d="M6 28V17q0-2 2-2h16q2 0 2 2v11h-6v-7h-8v7z" fill="#3a96dd" />
        </svg>
      </div>
      <div className={slot + "ml-[7px] w-[75px] border-transparent"}>
        <svg viewBox="0 0 37 38" className="h-[38px] w-[37px]">
          <path d="M16 4A15.500 15.500 0 1032 13" fill="none" stroke="#fbc916" strokeWidth="5" />
          <circle cx="18.500" cy="19.500" r="6" fill="#fb3f1e" />
          <path d="M20.500 20V1h5c0 4 6 4 6 8-2-1-4-1-7 0v11z" fill="#fb3f1e" />
        </svg>
      </div>
      <div className={slot + "ml-[7px] w-[61px] border-[#76b9ed] pr-[2px]"}>
        <svg viewBox="0 0 33 28" className="h-7 w-[33px]">
          <rect width="33" height="28" fill="#aab2b8" />
          <rect x="1.500" y="4" width="30" height="22" fill="#050505" />
          <path d="M1.500 26C5 15 20 14 31.500 13v13z" fill="#242424" />
          <text x="3" y="10.500" fontSize="6.500" fontFamily="Liberation Mono, monospace" fill="#fff">C:\_</text>
        </svg>
      </div>
      <div className={slot + "ml-[14px] w-[61px] border-[#76b9ed] pr-[3px]"}>
        <svg viewBox="0 0 36 34" className="h-[34px] w-9">
          <path d="M8 0h28v9H8z" fill="#41a5ee" />
          <path d="M8 9h28v8H8z" fill="#2b7cd3" />
          <path d="M8 17h28v8H8z" fill="#185abd" />
          <path d="M8 25h28v9H8z" fill="#103f91" />
          <rect y="8" width="18" height="18" rx="1.500" fill="#1c55b5" />
          <text x="9" y="22" fontSize="14" textAnchor="middle" fontFamily={sans} fontWeight="700" fill="#fff">W</text>
        </svg>
      </div>
      <div className={slot + "relative ml-[14px] w-[61px] border-[#76b9ed] pr-[2px]"}>
        <svg viewBox="0 0 33 33" className="size-[33px]">
          <circle cx="16.500" cy="16.500" r="16.500" fill="#2ba0dc" />
          <path d="M6 16.500L25 9l-3.500 16-6-4.500-3 3-.500-5.500z" fill="#fff" />
          <path d="M12 18l10-7-7.500 9z" fill="#bcdcf0" />
        </svg>
        <div className="absolute top-[34px] left-[28px] flex h-[17px] w-[23px] items-center justify-center rounded-[5px] bg-[#f03c35] text-[12px]">..63</div>
      </div>
      <div className="ml-auto flex w-[413px] shrink-0 items-center text-[16.800px]">
        <svg viewBox="0 0 18 10" className="h-[10px] w-[18px] shrink-0" fill="none" stroke="#fff" strokeWidth="1.400">
          <path d="M.7 9.300L9 1l8.300 8.300" />
        </svg>
        <svg viewBox="0 0 18 22" className="ml-[19px] h-[22px] w-[18px] shrink-0" fill="none" stroke="#fff" strokeWidth="1.300">
          <rect x="1" y="5.500" width="10" height="11" rx="1.500" />
          <path d="M11 10l5-3.500v9L11 12M2 2.500C5 .3 10 .3 13 2.500M2 19.500c3 2.200 8 2.200 11 0" />
        </svg>
        <svg viewBox="0 0 24 18" className="ml-[13px] h-[18px] w-6 shrink-0" fill="none" stroke="#fff" strokeWidth="1.300">
          <path d="M7 5h15v10.500H4V10M22.500 8v4" />
          <path d="M8 6.500h12.500V14H5.500v-3H8z" fill="#fff" stroke="none" />
          <path d="M2 0v4M6 0v4M.7 3.500h6.600V7q-3 5-6.600 0z" />
        </svg>
        <svg viewBox="0 0 20 20" className="ml-[15px] size-5 shrink-0" fill="none" stroke="#fff" strokeWidth="1.200">
          <path d="M1 19C1 9 8 1.500 18 1.500M5 19C5.500 11 11 6 18 6M9.500 19c.500-5 4-8.500 8.500-8.500M14 19c0-2 2-4 4-4" />
          <circle cx="17.500" cy="18" r="1.300" fill="#fff" />
        </svg>
        <svg viewBox="0 0 23 20" className="ml-[13px] h-5 w-[23px] shrink-0" fill="none" stroke="#fff" strokeWidth="1.200">
          <path d="M1 6.500h3.500L9.500 1v18l-5-5.500H1zM13 7c1.500 1.500 1.500 4.500 0 6M16 4.500c3 3 3 8 0 11" />
          <path d="M19 2c4.500 4 4.500 12 0 16" opacity=".5" />
        </svg>
        <span className="ml-[17px] w-[34px] pt-px tracking-[-0.300px]">ENG</span>
        <div className="ml-[15px] w-[96px] shrink-0 text-center leading-[28px] tracking-[-0.100px]">
          <div>19:22</div>
          <div>09.10.2022</div>
        </div>
        <svg viewBox="0 0 24 25" className="ml-[24px] h-[25px] w-6 shrink-0">
          <path d="M0 0h24v20h-8.500l-4 5-4-5H0z" fill="#fff" />
          <path d="M4.500 5.500h15M4.500 10h15M4.500 14.500h9" stroke="#222" strokeWidth="1.300" />
        </svg>
        <div className="ml-[30px] h-[60px] w-[1.500px] bg-[#77706c]" />
      </div>
    </div>
  );
}

export default function App() {
  return (
    <div className="flex h-[1080px] w-[1920px] flex-col overflow-hidden bg-white font-['Open_Sans',sans-serif]">
      <TabStrip />
      <Toolbar />
      <div className="h-[2px] shrink-0 bg-[#d9dbdf]" />
      <div className="flex h-[913px] shrink-0 overflow-hidden">
        <div className="w-[1895px] shrink-0">
          <GitHubHeader />
          <RepoHeader />
          <PrHeader />
          <PrTabs />
          <div className="mt-[24px] flex">
            <Timeline />
            <Sidebar />
          </div>
        </div>
        <div className="flex w-[25px] flex-col items-center bg-[#f1f1f1]">
          <svg viewBox="0 0 12 7" className="mt-[10px] h-[6px] w-[11px]">
            <path d="M0 7h12L6 0z" fill="#a3a3a3" />
          </svg>
          <div className="mt-[9px] h-[371px] w-[21px] bg-[#c1c1c1]" />
          <Caret className="mt-auto mb-[8px] text-[#505050]" />
        </div>
      </div>
      <Taskbar />
    </div>
  );
}
